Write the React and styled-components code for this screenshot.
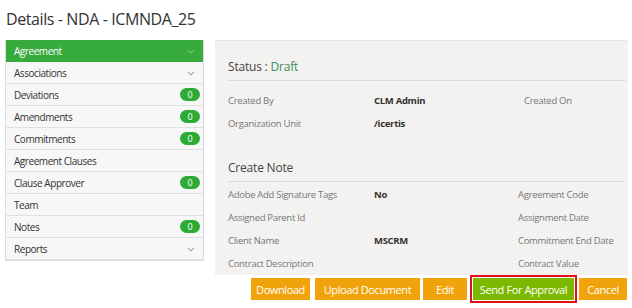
import React from 'react'
import styled, { createGlobalStyle } from 'styled-components'

const Global = createGlobalStyle`
  body {
    margin: 0;
    background: #fff;
    font-family: 'Open Sans', 'Noto Sans', sans-serif;
    color: #333;
  }
`

const Page = styled.div`
  width: 632px;
  height: 308px;
  padding: 0 4px 0 5px;
  box-sizing: border-box;
  overflow: hidden;
`

const Title = styled.h1`
  margin: 0;
  height: 40px;
  padding: 8px 0 0 1px;
  box-sizing: border-box;
  font-size: 16px;
  font-weight: 400;
  line-height: 22px;
  letter-spacing: -0.4px;
  color: #333;
`

const Body = styled.div`
  display: flex;
  gap: 11px;
  align-items: flex-start;
`

const Sidebar = styled.nav`
  width: 199px;
  border: 1px solid #dcdcdc;
  border-top: none;
  box-sizing: border-box;
  background: #f7f7f7;
`

const NavItem = styled.div`
  display: flex;
  align-items: center;
  justify-content: space-between;
  height: 22px;
  padding: 0 3px 0 8px;
  box-sizing: border-box;
  border-bottom: 1px solid ${p => (p.$active ? '#37ab3c' : '#e0e0e0')};
  background: ${p => (p.$active ? '#37ab3c' : 'transparent')};
  color: ${p => (p.$active ? '#fff' : '#333')};
  font-size: 10px;
  letter-spacing: -0.45px;
`

const Badge = styled.span`
  min-width: 20px;
  height: 13px;
  border-radius: 7px;
  background: #2eab36;
  color: #fff;
  font-size: 9px;
  line-height: 13px;
  letter-spacing: 0;
  text-align: center;
`

const Chevron = ({ color }) => (
  <svg width="20" height="10" viewBox="0 0 20 10">
    <path d="M8 4 L11 7 L14 4" fill="none" stroke={color} strokeWidth="1" />
  </svg>
)

const Main = styled.div`
  flex: 1;
  display: flex;
  flex-direction: column;
`

const Panel = styled.section`
  background: #f3f2f1;
  border-top: 1px solid #e6e6e6;
  padding: 0 2px 1px 13px;
  height: 235px;
  box-sizing: border-box;
`

const SectionHead = styled.div`
  padding: ${p => (p.$first ? '16px' : '23px')} 0 3px;
  line-height: 20px;
  font-size: 12px;
  letter-spacing: -0.2px;
  color: #444;
  border-bottom: 1px solid #dcdcdc;
`

const Draft = styled.span`
  color: #3d8f57;
`

const Fields = styled.div`
  display: grid;
  grid-template-columns: ${p => p.$cols};
  grid-auto-rows: 23px;
  align-items: center;
  margin-top: ${p => p.$top}px;
  font-size: 9.5px;
  letter-spacing: -0.3px;
`

const Label = styled.span`
  color: #777;
  white-space: nowrap;
`

const Value = styled.span`
  color: #333;
  font-weight: 700;
  white-space: nowrap;
`

const Actions = styled.div`
  display: flex;
  justify-content: flex-end;
  align-items: center;
  margin-top: 3px;
  padding-right: 1px;
`

const Button = styled.button`
  width: ${p => p.$w}px;
  height: 22px;
  margin-left: ${p => p.$gap}px;
  padding: 0;
  border: none;
  background: ${p => (p.$primary ? '#7cb800' : '#f0a30a')};
  color: #fff;
  font-family: inherit;
  font-size: 11px;
  letter-spacing: -0.4px;
  text-align: center;
  outline: ${p => (p.$primary ? '2px solid #e0101a' : 'none')};
  outline-offset: 1px;
  cursor: pointer;
`

const navItems = [
  { name: 'Agreement', active: true, chevron: true },
  { name: 'Associations', chevron: true },
  { name: 'Deviations', badge: 0 },
  { name: 'Amendments', badge: 0 },
  { name: 'Commitments', badge: 0 },
  { name: 'Agreement Clauses' },
  { name: 'Clause Approver', badge: 0 },
  { name: 'Team' },
  { name: 'Notes', badge: 0 },
  { name: 'Reports', chevron: true },
]

const noteFields = [
  ['Adobe Add Signature Tags', 'No', 'Agreement Code'],
  ['Assigned Parent Id', '', 'Assignment Date'],
  ['Client Name', 'MSCRM', 'Commitment End Date'],
  ['Contract Description', '', 'Contract Value'],
]

const actions = [
  { label: 'Download', w: 59, gap: 0 },
  { label: 'Upload Document', w: 105, gap: 5 },
  { label: 'Edit', w: 44, gap: 3 },
  { label: 'Send For Approval', w: 101, gap: 6, primary: true },
  { label: 'Cancel', w: 48, gap: 5 },
]

export default function App() {
  return (
    <Page>
      <Global />
      <Title>Details - NDA - ICMNDA_25</Title>
      <Body>
        <Sidebar>
          {navItems.map(item => (
            <NavItem key={item.name} $active={item.active}>
              <span>{item.name}</span>
              {item.badge !== undefined && <Badge>{item.badge}</Badge>}
              {item.chevron && <Chevron color={item.active ? '#7fcb7f' : '#888'} />}
            </NavItem>
          ))}
        </Sidebar>
        <Main>
          <Panel>
            <SectionHead $first>
              Status : <Draft>Draft</Draft>
            </SectionHead>
            <Fields $cols="146px 150px 1fr" $top={8}>
              <Label>Created By</Label>
              <Value>CLM Admin</Value>
              <Label>Created On</Label>
              <Label>Organization Unit</Label>
              <Value>/icertis</Value>
              <span />
            </Fields>
            <SectionHead>Create Note</SectionHead>
            <Fields $cols="146px 144px 1fr" $top={1}>
              {noteFields.map(([label, value, right]) => (
                <React.Fragment key={label}>
                  <Label>{label}</Label>
                  <Value>{value}</Value>
                  <Label>{right}</Label>
                </React.Fragment>
              ))}
            </Fields>
          </Panel>
          <Actions>
            {actions.map(a => (
              <Button key={a.label} $w={a.w} $gap={a.gap} $primary={a.primary}>
                {a.label}
              </Button>
            ))}
          </Actions>
        </Main>
      </Body>
    </Page>
  )
}
